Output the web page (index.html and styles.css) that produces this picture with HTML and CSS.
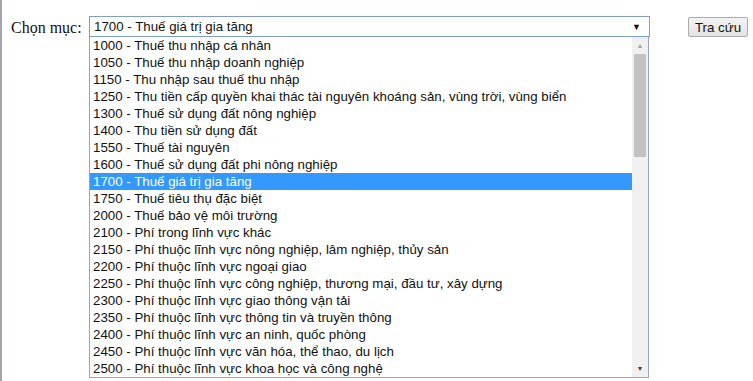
FILE: index.html
```html
<!DOCTYPE html>
<html lang="vi">
<head>
<meta charset="utf-8">
<link rel="stylesheet" href="styles.css">
</head>
<body>
<div class="page">
  <div class="row">
    <span class="label">Chọn mục:</span>
    <div class="select-wrap">
      <div class="select">
        <span class="select-value">1700 - Thuế giá trị gia tăng</span>
        <span class="select-arrow">▼</span>
      </div>
      <div class="dropdown">
        <ul class="options">
          <li>1000 - Thuế thu nhập cá nhân</li>
          <li>1050 - Thuế thu nhập doanh nghiệp</li>
          <li>1150 - Thu nhập sau thuế thu nhập</li>
          <li>1250 - Thu tiền cấp quyền khai thác tài nguyên khoáng sản, vùng trời, vùng biển</li>
          <li>1300 - Thuế sử dụng đất nông nghiệp</li>
          <li>1400 - Thu tiền sử dụng đất</li>
          <li>1550 - Thuế tài nguyên</li>
          <li>1600 - Thuế sử dụng đất phi nông nghiệp</li>
          <li class="selected">1700 - Thuế giá trị gia tăng</li>
          <li>1750 - Thuế tiêu thụ đặc biệt</li>
          <li>2000 - Thuế bảo vệ môi trường</li>
          <li>2100 - Phí trong lĩnh vực khác</li>
          <li>2150 - Phí thuộc lĩnh vực nông nghiệp, lâm nghiệp, thủy sản</li>
          <li>2200 - Phí thuộc lĩnh vực ngoại giao</li>
          <li>2250 - Phí thuộc lĩnh vực công nghiệp, thương mại, đầu tư, xây dựng</li>
          <li>2300 - Phí thuộc lĩnh vực giao thông vận tải</li>
          <li>2350 - Phí thuộc lĩnh vực thông tin và truyền thông</li>
          <li>2400 - Phí thuộc lĩnh vực an ninh, quốc phòng</li>
          <li>2450 - Phí thuộc lĩnh vực văn hóa, thể thao, du lịch</li>
          <li>2500 - Phí thuộc lĩnh vực khoa học và công nghệ</li>
        </ul>
        <div class="scrollbar">
          <span class="sb-btn sb-up">▲</span>
          <div class="sb-track"><div class="sb-thumb"></div></div>
          <span class="sb-btn sb-down">▼</span>
        </div>
      </div>
    </div>
    <button class="btn">Tra cứu</button>
  </div>
</div>
</body>
</html>
```

FILE: styles.css
```css
html, body {
  margin: 0;
  padding: 0;
  background: #ffffff;
}

.page {
  width: 753px;
  height: 381px;
  box-sizing: border-box;
  border-left: 2px solid #a3a7ad;
  padding: 16px 0 0 9px;
}

.row {
  display: flex;
  align-items: flex-start;
}

.label {
  font-family: "Liberation Serif", serif;
  font-size: 16px;
  color: #111;
  width: 78px;
  line-height: 21px;
  padding-top: 1px;
}

.select-wrap {
  position: relative;
  width: 561px;
}

.select {
  box-sizing: border-box;
  height: 21px;
  border: 1px solid #7f9dd1;
  display: flex;
  align-items: center;
  justify-content: space-between;
  padding: 0 8px 0 4px;
  font-family: "Liberation Sans", Arial, sans-serif;
  font-size: 13.3px;
  color: #111;
}

.select-arrow {
  font-size: 9px;
  color: #111;
}

.dropdown {
  position: absolute;
  top: 21px;
  left: 0;
  width: 560px;
  height: 341px;
  box-sizing: border-box;
  border: 1px solid #93a6c4;
  border-top: none;
  background: #fff;
  display: flex;
}

.options {
  list-style: none;
  margin: 0;
  padding: 0;
  flex: 1;
  font-family: "Liberation Sans", Arial, sans-serif;
  font-size: 13.3px;
  color: #111;
}

.options li {
  height: 17px;
  line-height: 17px;
  padding-left: 3px;
  white-space: nowrap;
}

.options li.selected {
  background: #3399ff;
  color: #fff;
}

.scrollbar {
  width: 16px;
  display: flex;
  flex-direction: column;
  background: #f0f0f0;
}

.sb-btn {
  height: 17px;
  display: flex;
  align-items: center;
  justify-content: center;
  font-size: 7px;
  color: #a0a0a0;
}

.sb-down {
  color: #404040;
}

.sb-track {
  flex: 1;
  padding: 0 2px;
}

.sb-thumb {
  height: 103px;
  background: #c2c2c2;
}

.btn {
  margin-left: 38px;
  margin-top: 1px;
  width: 60px;
  height: 20px;
  box-sizing: border-box;
  border: 1px solid #acacac;
  border-radius: 2px;
  background: linear-gradient(#f3f3f3, #e3e3e3);
  font-family: "Liberation Sans", Arial, sans-serif;
  font-size: 13.3px;
  color: #111;
  padding: 0;
}
```
